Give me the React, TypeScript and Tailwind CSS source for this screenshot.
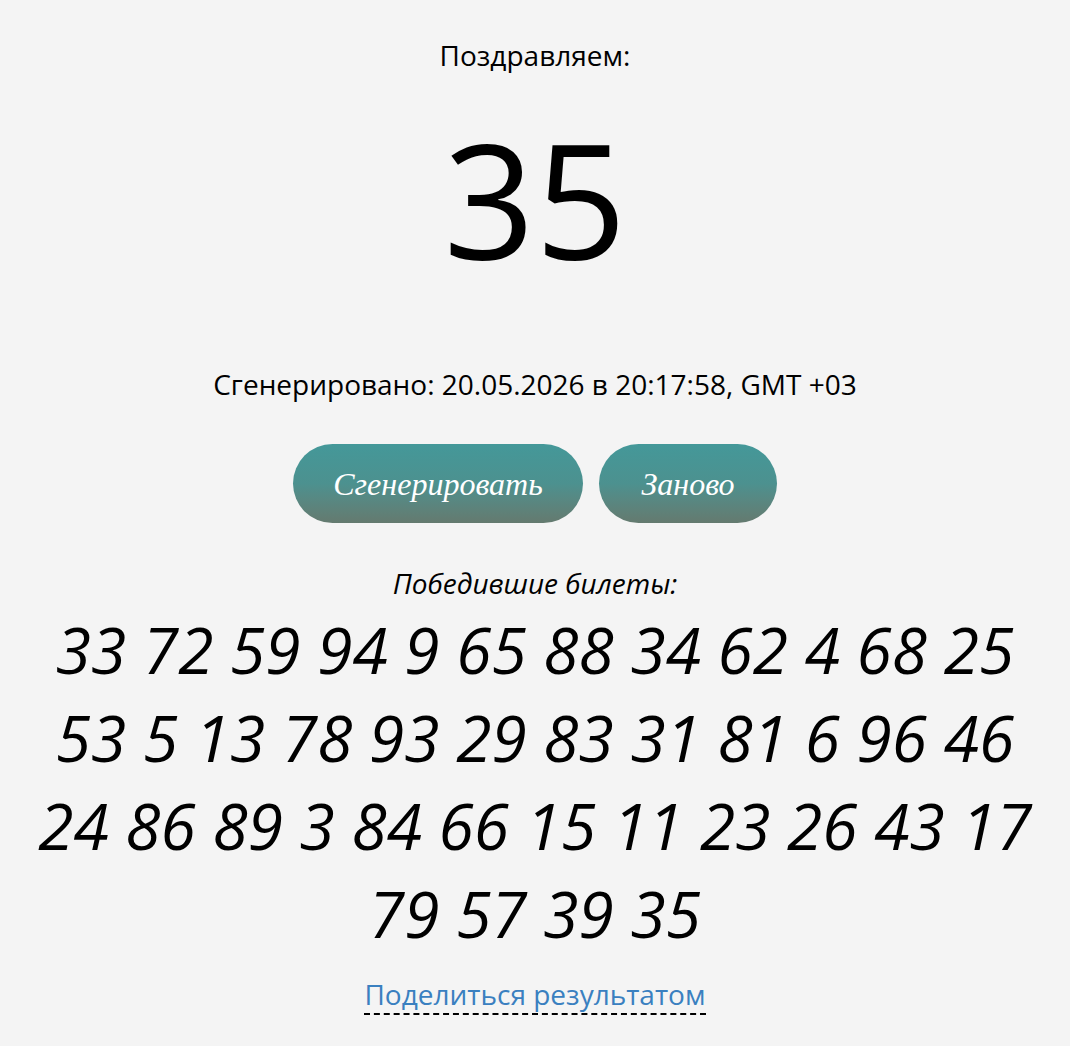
export default function App() {
  const tickets = [33, 72, 59, 94, 9, 65, 88, 34, 62, 4, 68, 25, 53, 5, 13, 78, 93, 29, 83, 31, 81, 6, 96, 46, 24, 86, 89, 3, 84, 66, 15, 11, 23, 26, 43, 17, 79, 57, 39, 35];

  return (
    <div className="min-h-screen bg-[#f4f4f4] text-black font-['Open_Sans',sans-serif] flex flex-col items-center">
      <div className="mt-[35px] text-[28px] leading-[40px]">Поздравляем:</div>
      <div className="mt-[37px] text-[160px] leading-[170px]">35</div>
      <div className="mt-[82px] text-[28px] leading-[40px]">Сгенерировано: 20.05.2026 в 20:17:58, GMT +03</div>

      <div className="mt-[40px] flex gap-[16px]">
        <button className="h-[79px] w-[290px] rounded-full bg-gradient-to-b from-[#449899] via-[#4c918f] to-[#647a6f] text-white italic text-[32px] font-['Liberation_Serif',serif]">
          Сгенерировать
        </button>
        <button className="h-[79px] w-[178px] rounded-full bg-gradient-to-b from-[#449899] via-[#4c918f] to-[#647a6f] text-white italic text-[32px] font-['Liberation_Serif',serif]">
          Заново
        </button>
      </div>

      <div className="mt-[40px] italic text-[28px] leading-[40px]">Победившие билеты:</div>
      <div className="mt-[3px] w-[1010px] text-center italic text-[64px] leading-[88px]">
        {tickets.join(" ")}
      </div>
      <a href="#" className="mt-[17px] text-[28px] leading-[38px] text-[#3a80c0] border-b-2 border-dashed border-black">
        Поделиться результатом
      </a>
    </div>
  );
}
